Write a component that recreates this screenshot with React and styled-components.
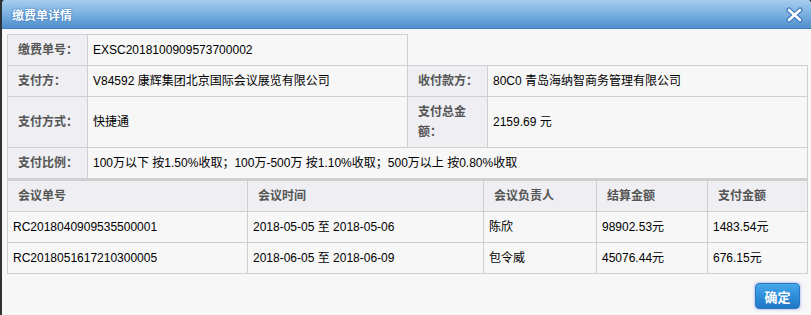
import React from 'react'
import styled, { createGlobalStyle } from 'styled-components'

const GlobalStyle = createGlobalStyle`
    html, body {
        margin: 0;
        padding: 0;
        background: #2e3136;
    }
    body {
        font-family: "Liberation Sans", Arial, "Noto Sans CJK SC", sans-serif;
        font-size: 12px;
    }
`;

const Dialog = styled.div`
    margin-left: 2px;
    width: 809px;
    height: 315px;
    background: #f7f7f7;
    border-radius: 4px 4px 0 0;
    overflow: hidden;
    display: flex;
    flex-direction: column;
`;

const TitleBar = styled.div`
    height: 29px;
    box-sizing: border-box;
    display: flex;
    align-items: center;
    justify-content: space-between;
    padding: 0 8px 0 10px;
    background: linear-gradient(to bottom, #a6cdee 0%, #7fb3e2 45%, #4f8fcd 100%);
    border-bottom: 1px solid #3f7fc0;
`;

const Title = styled.span`
    color: #fff;
    font-weight: bold;
    font-size: 12px;
    text-shadow: 0 0 2px #2f6fb5, 0 0 1px #2f6fb5;
`;

const CloseBtn = styled.span`
    display: flex;
    width: 17px;
    height: 16px;
    margin-top: 1px;
`;

const Body = styled.div`
    padding: 5px 0 0 5px;
`;

const Table = styled.table`
    width: 800px;
    table-layout: fixed;
    border-collapse: collapse;
    color: #000;
    & + & {
        border-top: 2px solid #cfcfcf;
    }
`;

const Label = styled.td`
    border: 1px solid #cfcfcf;
    background: #efeff3;
    color: #555;
    font-weight: bold;
    padding: 5px 2px 5px 10px;
    line-height: 20px;
    vertical-align: middle;
`;

const Value = styled.td`
    border: 1px solid #cfcfcf;
    padding: 5px 5px;
    line-height: 20px;
    vertical-align: middle;
    white-space: nowrap;
`;

const Blank = styled.td`
    border: none;
`;

const Head = styled.th`
    border: 1px solid #cfcfcf;
    background: #efeff3;
    color: #555;
    font-weight: bold;
    text-align: left;
    padding: 5px 10px;
    line-height: 20px;
`;

const Cell = styled.td`
    border: 1px solid #cfcfcf;
    padding: 5px 5px;
    line-height: 20px;
    white-space: nowrap;
`;

const Footer = styled.div`
    display: flex;
    justify-content: flex-end;
    padding: 9px 11px 0 0;
`;

const OkButton = styled.button`
    width: 45px;
    height: 26px;
    border: 1px solid #2a78c2;
    border-radius: 4px;
    background: linear-gradient(to bottom, #45a8ea 0%, #2f8ed9 50%, #1f78c6 100%);
    box-shadow: 0 0 3px rgba(60, 90, 220, 0.6);
    color: #fff;
    font-family: "Liberation Sans", "Noto Sans CJK SC", sans-serif;
    font-size: 13px;
    font-weight: bold;
    padding: 0;
    cursor: pointer;
`;

const meetings = [
    { no: 'RC2018040909535500001', time: '2018-05-05 至 2018-05-06', owner: '陈欣', settle: '98902.53元', pay: '1483.54元' },
    { no: 'RC2018051617210300005', time: '2018-06-05 至 2018-06-09', owner: '包令威', settle: '45076.44元', pay: '676.15元' },
]

const App = () => {
    return (
        <>
            <GlobalStyle />
            <Dialog>
                <TitleBar>
                    <Title>缴费单详情</Title>
                    <CloseBtn>
                        <svg width="17" height="16" viewBox="0 0 17 16">
                            <path d="M3 3 L14 13 M14 3 L3 13" stroke="#3a78bd" strokeWidth="5" strokeLinecap="round" />
                            <path d="M3 3 L14 13 M14 3 L3 13" stroke="#fff" strokeWidth="2.6" strokeLinecap="round" />
                        </svg>
                    </CloseBtn>
                </TitleBar>
                <Body>
                    <Table>
                        <colgroup>
                            <col style={{ width: 80 }} />
                            <col style={{ width: 320 }} />
                            <col style={{ width: 80 }} />
                            <col style={{ width: 320 }} />
                        </colgroup>
                        <tbody>
                            <tr>
                                <Label>缴费单号：</Label>
                                <Value>EXSC2018100909573700002</Value>
                                <Blank colSpan={2} />
                            </tr>
                            <tr>
                                <Label>支付方：</Label>
                                <Value>V84592 康辉集团北京国际会议展览有限公司</Value>
                                <Label>收付款方：</Label>
                                <Value>80C0 青岛海纳智商务管理有限公司</Value>
                            </tr>
                            <tr>
                                <Label>支付方式：</Label>
                                <Value>快捷通</Value>
                                <Label>支付总金额：</Label>
                                <Value>2159.69 元</Value>
                            </tr>
                            <tr>
                                <Label>支付比例：</Label>
                                <Value colSpan={3}>100万以下 按1.50%收取；100万-500万 按1.10%收取；500万以上 按0.80%收取</Value>
                            </tr>
                        </tbody>
                    </Table>
                    <Table>
                        <colgroup>
                            <col style={{ width: 240 }} />
                            <col style={{ width: 236 }} />
                            <col style={{ width: 113 }} />
                            <col style={{ width: 111 }} />
                            <col style={{ width: 100 }} />
                        </colgroup>
                        <thead>
                            <tr>
                                <Head>会议单号</Head>
                                <Head>会议时间</Head>
                                <Head>会议负责人</Head>
                                <Head>结算金额</Head>
                                <Head>支付金额</Head>
                            </tr>
                        </thead>
                        <tbody>
                            {meetings.map(m => (
                                <tr key={m.no}>
                                    <Cell>{m.no}</Cell>
                                    <Cell>{m.time}</Cell>
                                    <Cell>{m.owner}</Cell>
                                    <Cell>{m.settle}</Cell>
                                    <Cell>{m.pay}</Cell>
                                </tr>
                            ))}
                        </tbody>
                    </Table>
                </Body>
                <Footer>
                    <OkButton>确定</OkButton>
                </Footer>
            </Dialog>
        </>
    )
}

export default App
